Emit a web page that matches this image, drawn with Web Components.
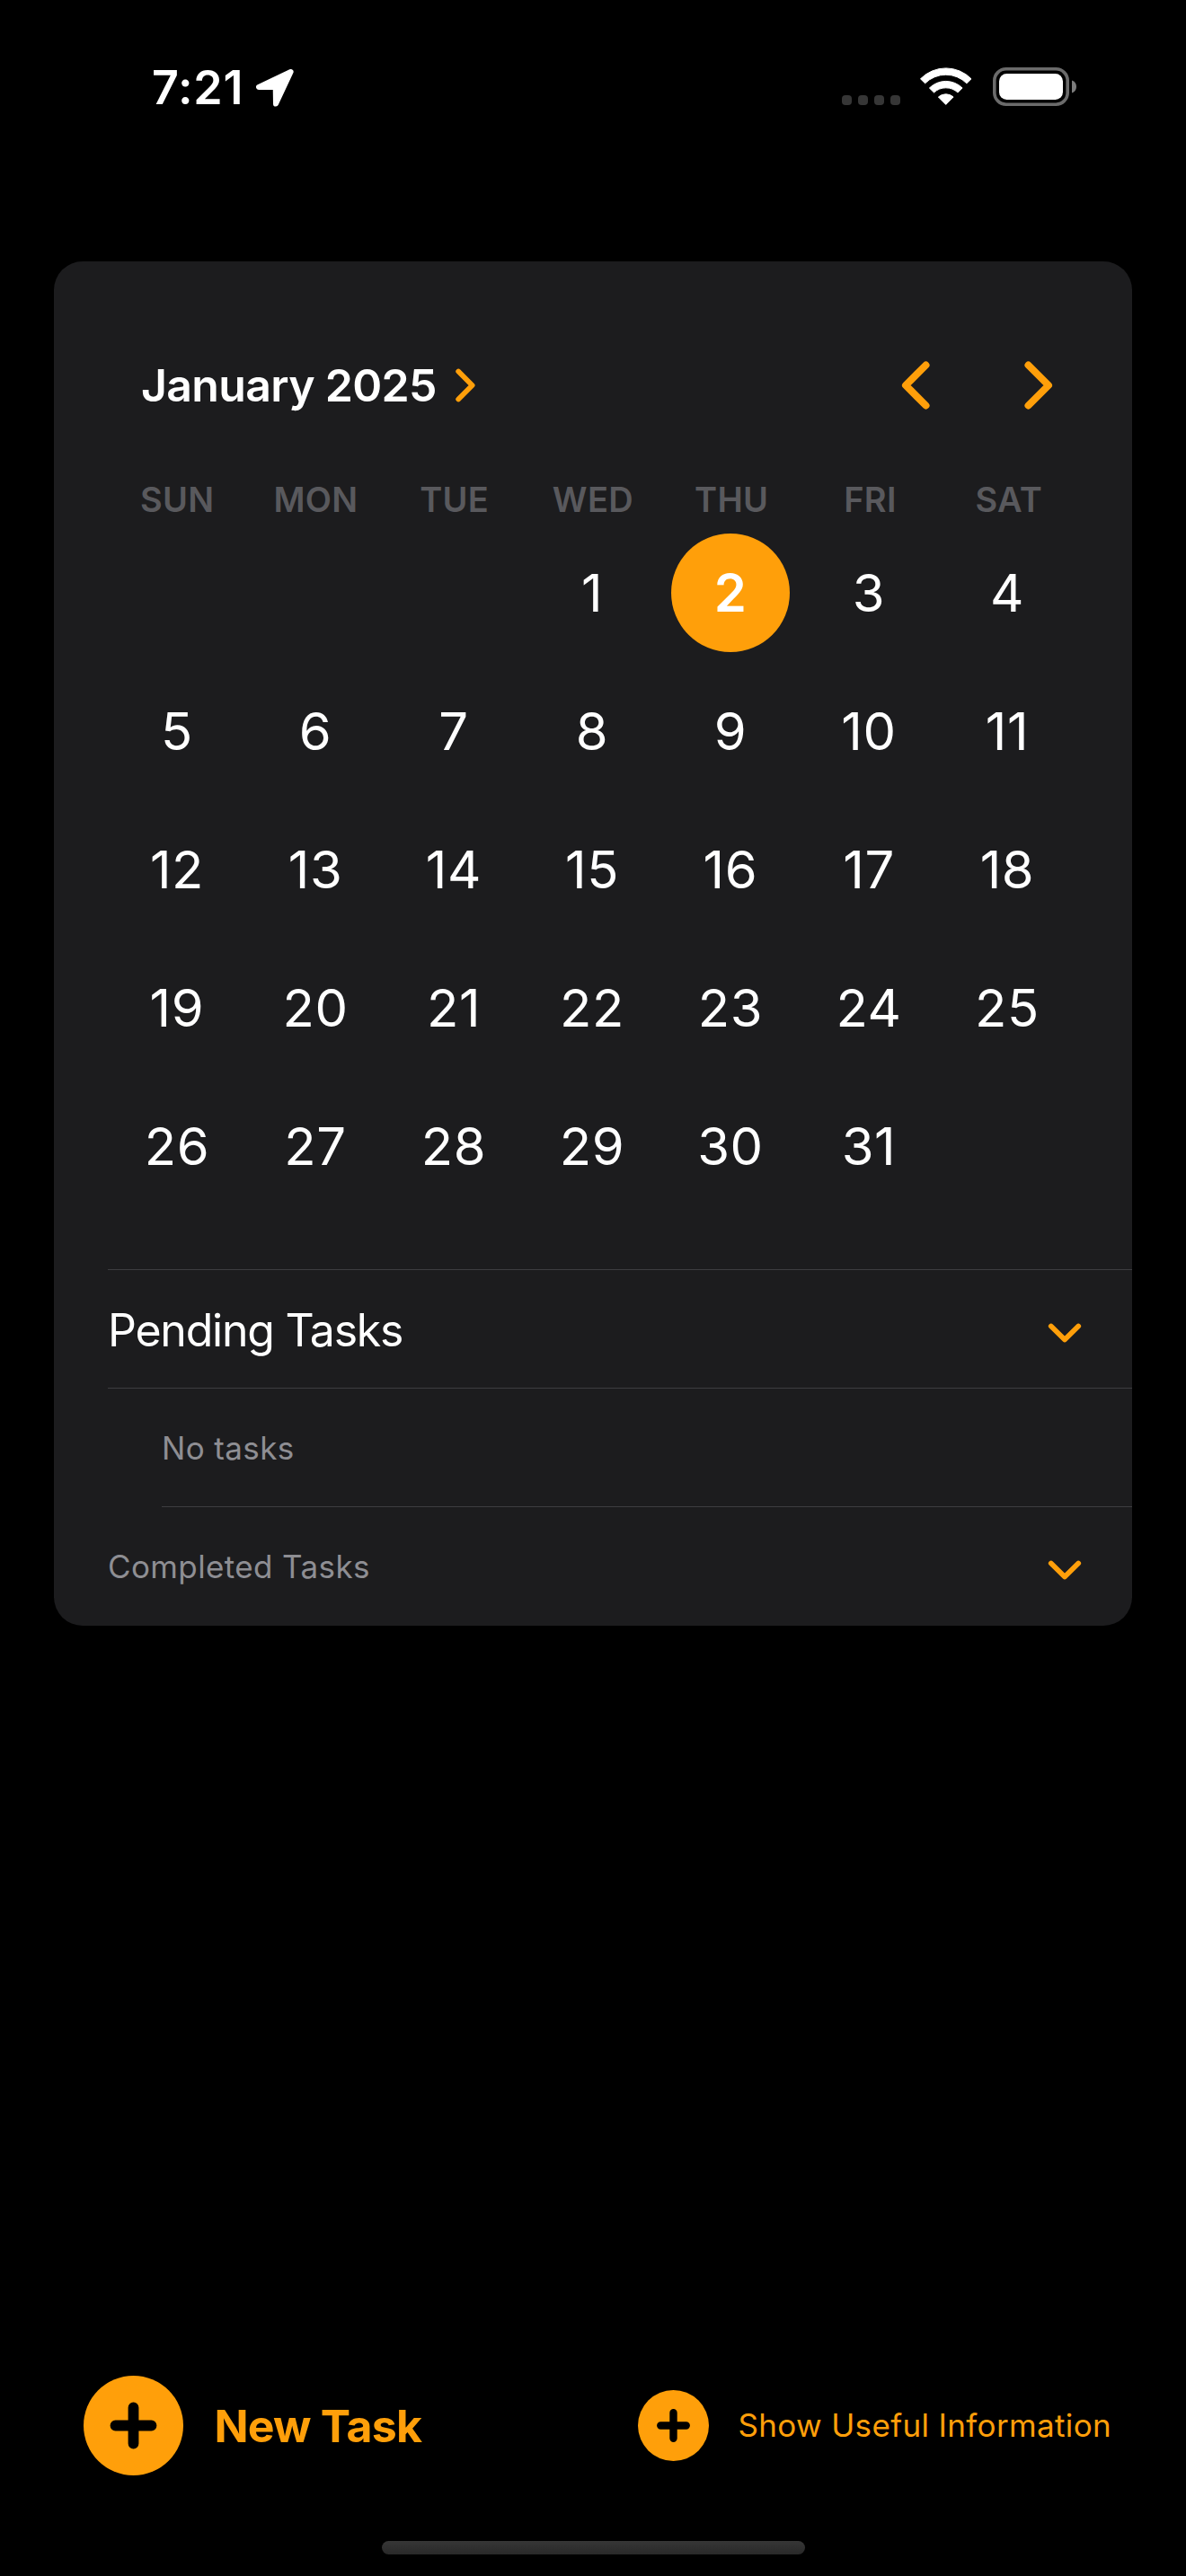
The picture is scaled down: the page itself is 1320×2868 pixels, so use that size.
<!DOCTYPE html>
<html lang="en">
<head>
<meta charset="utf-8">
<title>Calendar</title>
<style>
  html, body { margin: 0; background: #000; }
  body { width: 1320px; height: 2868px; overflow: hidden; font-family: Inter, "Liberation Sans", sans-serif; color: #fff; --accent: #ff9f0a; --card: #1c1c1e; --line: #3d3d40; --muted: #8e8e93; --dim: #59595d; }
</style>
</head>
<body>
<app-screen>
  <status-bar slot="status" time="7:21"></status-bar>
  <task-card>
    <month-calendar slot="calendar" month="January 2025" offset="3" days="31" selected="2"></month-calendar>
    <list-row class="primary" chevron>Pending Tasks</list-row>
    <list-row class="nested">No tasks</list-row>
    <list-row class="last" chevron>Completed Tasks</list-row>
  </task-card>
  <action-button slot="actions" class="large">New Task</action-button>
  <action-button slot="actions" class="small">Show Useful Information</action-button>
</app-screen>

<script>
class BaseElement extends HTMLElement {
  connectedCallback() {
    if (!this.shadowRoot) this.attachShadow({ mode: 'open' }).innerHTML = this.render();
  }
}

customElements.define('app-screen', class extends BaseElement {
  render() {
    return `<style>
      :host { display: flex; flex-direction: column; width: 1320px; height: 2868px; background: #000; }
      main { flex: 1; padding: 95px 60px 0; }
      footer { display: flex; justify-content: space-between; align-items: center; height: 111px; padding: 0 83px 0 93px; }
      .home { width: 471px; height: 15px; border-radius: 8px; margin: 73px auto 24px; background: linear-gradient(#363636, #292929); }
    </style>
    <slot name="status"></slot>
    <main><slot></slot></main>
    <footer><slot name="actions"></slot></footer>
    <div class="home"></div>`;
  }
});

customElements.define('status-bar', class extends BaseElement {
  render() {
    return `<style>
      :host { display: flex; align-items: center; justify-content: space-between; height: 196px; padding: 0 122px 0 169px; }
      .side { display: flex; align-items: center; }
      .time { font-size: 52px; font-weight: 600; line-height: 60px; letter-spacing: .75px; }
      svg { display: block; flex: none; }
      .arrow { margin-left: 14px; }
      .dots { display: flex; gap: 7px; margin: 27px 22px 0 0; }
      .dots i { width: 11px; height: 11px; border-radius: 4px; background: #363636; }
      .wifi { margin-right: 22px; margin-top: -4px; }
      .battery { margin-top: -3px; }
    </style>
    <div class="side">
      <span class="time">${this.getAttribute('time')}</span>
      <svg class="arrow" width="42" height="42" viewBox="0 0 42 42"><path d="M38.6 3 3 20h18.7L22 38.6Z" fill="#fff" stroke="#fff" stroke-width="6" stroke-linejoin="round"/></svg>
    </div>
    <div class="side">
      <div class="dots"><i></i><i></i><i></i><i></i></div>
      <svg class="wifi" width="58" height="42" viewBox="0 0 58 42" fill="#fff" stroke="#fff" stroke-width="1" stroke-linejoin="round">
        <path d="M.5 12.8A39.5 39.5 0 0 1 57 12.8L51.9 17.8A32.8 32.8 0 0 0 5.6 17.8Z"/>
        <path d="M10.4 23A26 26 0 0 1 47.1 23L42 28A19.5 19.5 0 0 0 15.5 28Z"/>
        <path d="M20.4 33A12.5 12.5 0 0 1 37.1 33L28.75 41.4Z"/>
      </svg>
      <svg class="battery" width="94" height="43" viewBox="0 0 94 43">
        <rect x="2.800" y="1.800" width="81.400" height="39.400" rx="13" fill="none" stroke="#6b6b6b" stroke-width="3.600"/>
        <rect x="8" y="7" width="71" height="29" rx="8.500" fill="#fff"/>
        <path d="M89 14.500c3 1 5 3.500 5 7s-2 6-5 7Z" fill="#7d7d7d"/>
      </svg>
    </div>`;
  }
});

customElements.define('task-card', class extends BaseElement {
  render() {
    return `<style>
      :host { display: flex; flex-direction: column; background: var(--card); border-radius: 32px; overflow: hidden; }
    </style>
    <slot name="calendar"></slot>
    <slot></slot>`;
  }
});

customElements.define('month-calendar', class extends BaseElement {
  render() {
    const offset = +this.getAttribute('offset'), days = +this.getAttribute('days'), selected = +this.getAttribute('selected');
    const names = ['SUN', 'MON', 'TUE', 'WED', 'THU', 'FRI', 'SAT'].map(n => `<span>${n}</span>`).join('');
    let cells = '';
    for (let i = 0; i < offset; i++) cells += '<span></span>';
    for (let d = 1; d <= days; d++) cells += `<span${d === selected ? ' class="on"' : ''}><b>${d}</b></span>`;
    return `<style>
      :host { display: block; padding: 88px 60px 60px 60px; }
      header { display: flex; align-items: center; height: 100px; padding: 0 28px 0 37px; }
      h1 { margin: 0; font-size: 50px; line-height: 60px; font-weight: 600; letter-spacing: -.68px; }
      svg { display: block; fill: none; stroke: var(--accent); stroke-linecap: round; stroke-linejoin: round; }
      .open { margin-left: 21px; }
      .nav { display: flex; gap: 105px; margin-left: auto; }
      .week, .days { display: grid; grid-template-columns: repeat(7, 154px); }
      .week { grid-template-columns: repeat(7, 154.280px); margin-top: 50px; height: 54px; line-height: 54px; font-size: 38px; font-weight: 600; letter-spacing: .3px; color: var(--dim); text-align: center; }
      .days { grid-auto-rows: 154px; }
      .days span { display: flex; align-items: center; justify-content: center; }
      b { width: 132px; line-height: 132px; text-align: center; border-radius: 50%; font-size: 58px; font-weight: 400; letter-spacing: .6px; }
      .on b { background: var(--accent); font-weight: 600; }
    </style>
    <header>
      <h1>${this.getAttribute('month')}</h1>
      <svg class="open" width="22" height="38" viewBox="0 0 22 38" stroke-width="5.800"><path d="M3.200 3.500 18.600 19 3.200 34.500"/></svg>
      <div class="nav">
        <svg width="32" height="54" viewBox="0 0 32 54" stroke-width="8"><path d="M27.500 4.500 5 27l22.500 22.500"/></svg>
        <svg width="32" height="54" viewBox="0 0 32 54" stroke-width="8"><path d="M4.500 4.500 27 27 4.500 49.500"/></svg>
      </div>
    </header>
    <div class="week">${names}</div>
    <div class="days">${cells}</div>`;
  }
});

customElements.define('list-row', class extends BaseElement {
  render() {
    return `<style>
      :host { display: flex; align-items: center; justify-content: space-between; box-sizing: border-box; height: 132px; margin-left: 60px; padding-right: 56px; border-top: 1px solid var(--line); font-size: 35px; line-height: 60px; letter-spacing: .38px; color: var(--muted); }
      :host(.primary) { padding-top: 2px; font-size: 50px; letter-spacing: -1.240px; color: #fff; }
      :host(.nested) { border-top: 0; padding: 1px 0 0 60px; background: linear-gradient(var(--line), var(--line)) top / 100% 1px no-repeat; }
      :host(.last) { height: 133px; border-top: 0; padding-top: 1px; background: linear-gradient(var(--line), var(--line)) right top / calc(100% - 60px) 1px no-repeat; }
      svg { display: block; margin-top: 6px; }
      :host(.last) svg { margin-top: 7px; }
    </style>
    <span><slot></slot></span>
    ${this.hasAttribute('chevron') ? '<svg width="38" height="22" viewBox="0 0 38 22" fill="none" stroke="var(--accent)" stroke-width="5.800" stroke-linecap="round" stroke-linejoin="round"><path d="M3.800 3.500 19 18.500 34.200 3.500"/></svg>' : ''}`;
  }
});

customElements.define('action-button', class extends BaseElement {
  render() {
    return `<style>
      :host { display: flex; align-items: center; color: var(--accent); white-space: nowrap; line-height: 60px; }
      :host(.large) { gap: 34.500px; font-size: 50px; font-weight: 700; letter-spacing: -.830px; }
      :host(.small) { gap: 32px; font-size: 35px; letter-spacing: .35px; }
      :host(.small) span { margin-top: -2px; }
      svg { display: block; width: 79px; height: 79px; }
      :host(.large) svg { width: 111px; height: 111px; }
    </style>
    <svg viewBox="0 0 111 111"><circle cx="55.500" cy="55.500" r="55.500" fill="var(--accent)"/><path d="M55.500 35.500v40M35.500 55.500h40" stroke="#000" stroke-width="11.800" stroke-linecap="round"/></svg>
    <span><slot></slot></span>`;
  }
});
</script>
</body>
</html>
